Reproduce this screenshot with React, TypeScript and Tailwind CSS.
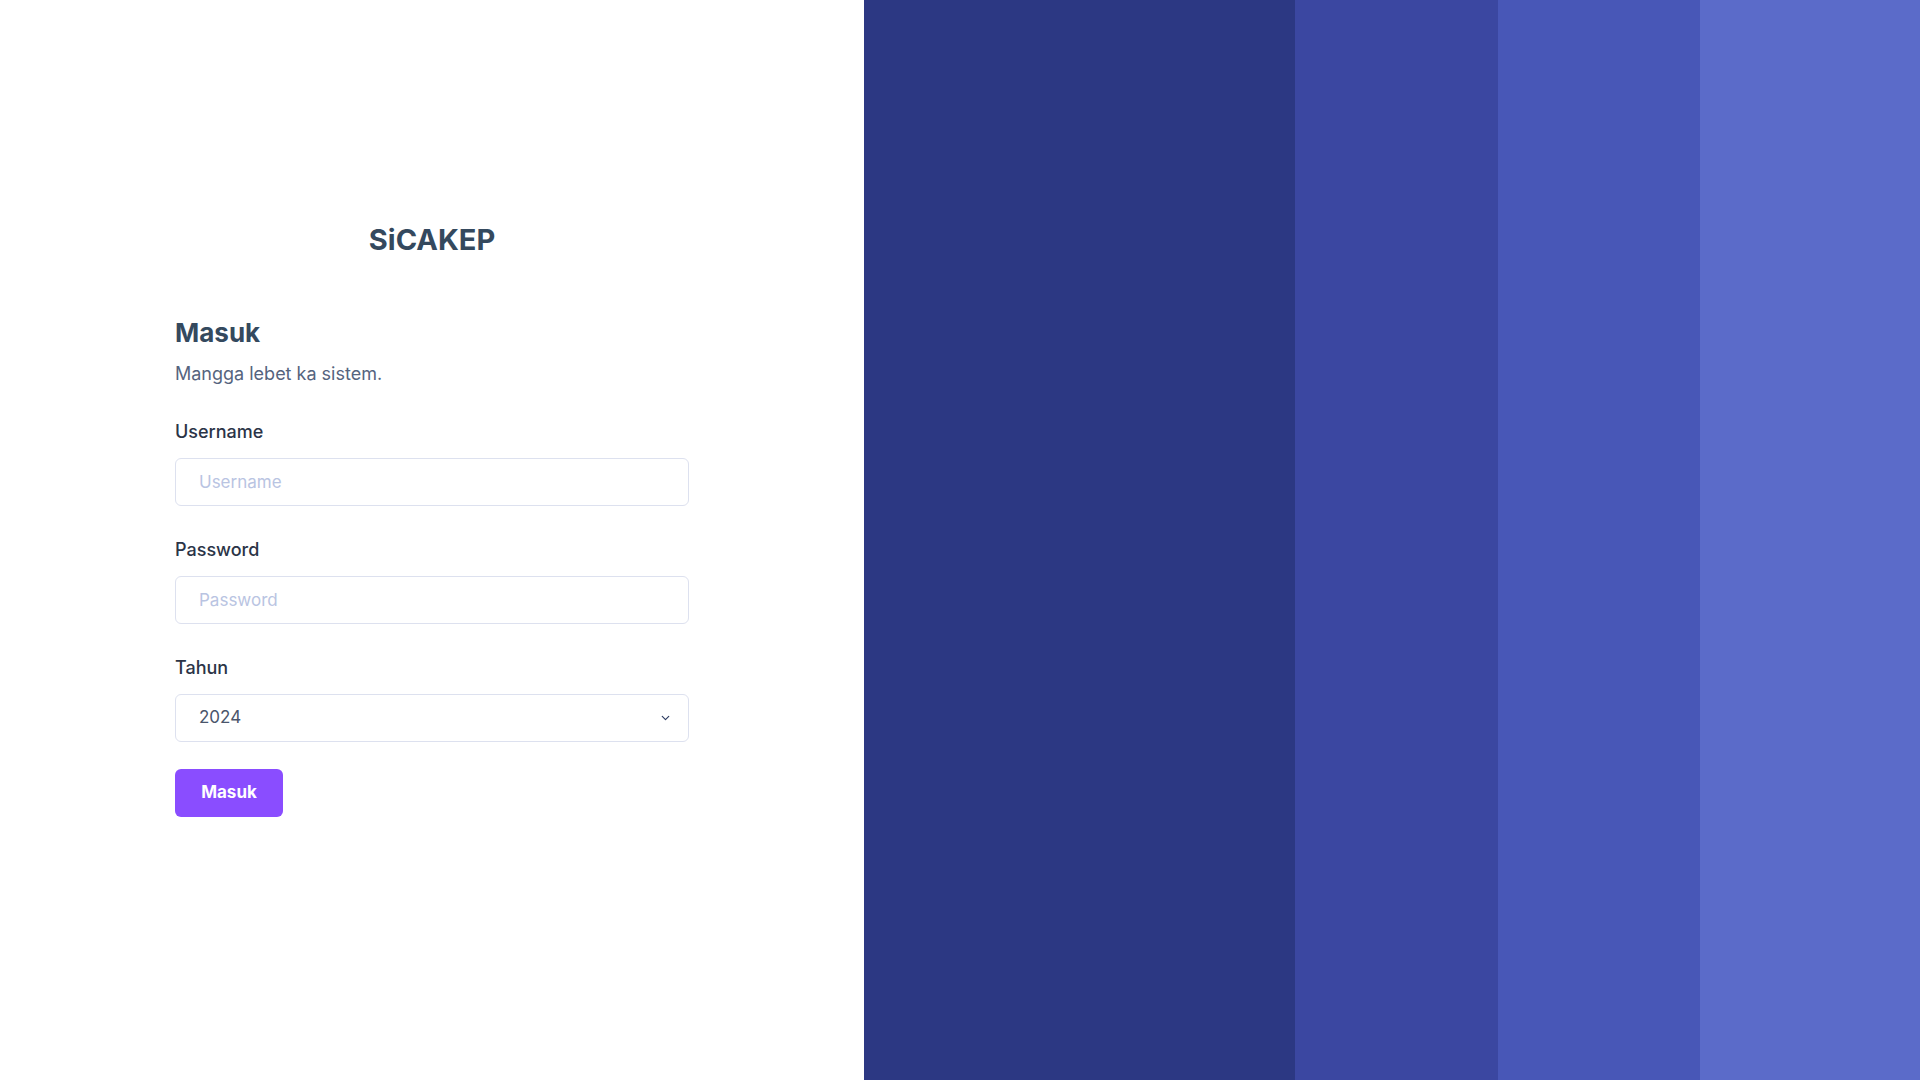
import { ChevronDown } from 'lucide-react';

const font = "font-['Inter','Liberation_Sans',sans-serif]";

function Field({ label, placeholder, type = 'text' }: { label: string; placeholder: string; type?: string }) {
  return (
    <div className="flex flex-col gap-3">
      <label className="text-[18px] leading-[28px] font-medium text-[#2b3447]">{label}</label>
      <input
        type={type}
        placeholder={placeholder}
        className="h-12 w-full rounded-md border border-[#dde1ef] bg-white px-[23px] text-[17px] text-[#3f4a5e] outline-none placeholder:text-[#b9c4e2]"
      />
    </div>
  );
}

export default function App() {
  return (
    <div className={`flex h-[1080px] w-[1920px] overflow-hidden bg-white ${font}`}>
      {/* Form side */}
      <div className="flex w-[864px] shrink-0 justify-center pt-[222px]">
        <div className="flex w-[514px] flex-col">
          <h1 className="text-center text-[29px] leading-[36px] font-bold text-[#34495e]">SiCAKEP</h1>

          <h2 className="mt-[59px] text-[26px] leading-[32px] font-bold text-[#34495e]">Masuk</h2>
          <p className="mt-[11px] text-[18px] leading-[28px] text-[#55647e]">Mangga lebet ka sistem.</p>

          <div className="mt-[30px] flex flex-col gap-[30px]">
            <Field label="Username" placeholder="Username" />
            <Field label="Password" placeholder="Password" type="password" />
            <div className="flex flex-col gap-3">
              <label className="text-[18px] leading-[28px] font-medium text-[#2b3447]">Tahun</label>
              <div className="relative">
                <select className="h-12 w-full appearance-none rounded-md border border-[#dde1ef] bg-white px-[23px] text-[17px] text-[#4a556b] outline-none">
                  <option>2024</option>
                  <option>2023</option>
                </select>
                <ChevronDown
                  className="pointer-events-none absolute right-[17px] top-1/2 -translate-y-1/2 text-[#2f3e63]"
                  size={13}
                  strokeWidth={2.2}
                />
              </div>
            </div>
          </div>

          <button className="mt-[27px] h-12 w-[108px] rounded-md bg-[#8a4dff] text-[17px] font-bold text-white">
            Masuk
          </button>
        </div>
      </div>

      {/* Decorative stripes */}
      <div className="flex flex-1">
        <div className="w-[431px] bg-[#2c3883]" />
        <div className="w-[203px] bg-[#3b47a1]" />
        <div className="w-[202px] bg-[#4857b7]" />
        <div className="flex-1 bg-[#5b6bc9]" />
      </div>
    </div>
  );
}
